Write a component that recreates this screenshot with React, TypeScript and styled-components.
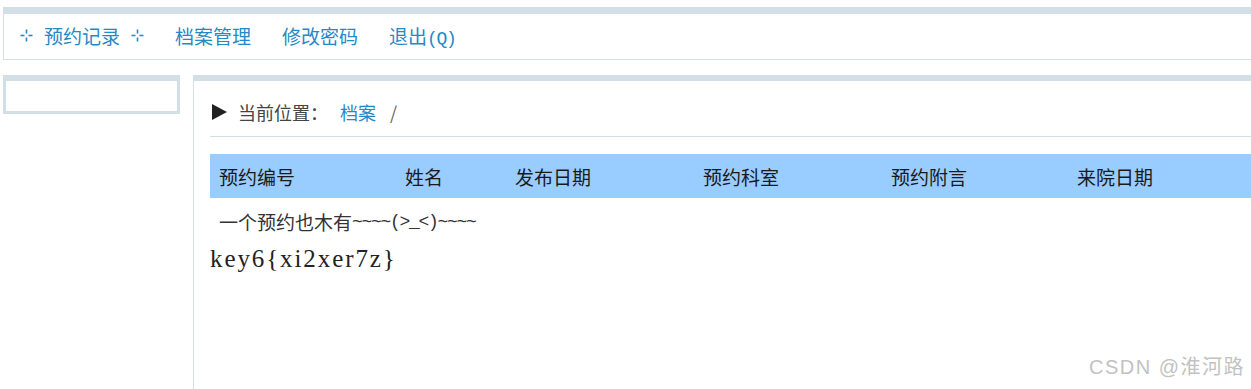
import React from "react";
import styled, { createGlobalStyle } from "styled-components";

const GlobalStyle = createGlobalStyle`
  html, body {
    margin: 0;
    padding: 0;
    background: #fff;
    overflow: hidden;
  }
  body {
    font-family: "Noto Sans CJK SC", "Liberation Sans", sans-serif;
  }
`;

const BAND = "#d3dfe6";
const LINK = "#2489c5";

// page frame
const Page = styled.div`
  position: relative;
  width: 1251px;
  height: 389px;
  padding: 7px 0 0 3px;
  box-sizing: border-box;
  overflow: hidden;
`;

// top navigation
const TopNav = styled.nav`
  width: 1270px;
  height: 53px;
  box-sizing: border-box;
  border: 1px solid ${BAND};
  border-top: 7px solid ${BAND};
  display: flex;
  align-items: center;
  padding: 0 0 0 16px;
  gap: 31px;
`;

const NavLink = styled.a`
  display: flex;
  align-items: center;
  gap: 11px;
  color: ${LINK};
  font-size: 19px;
  text-decoration: none;
  white-space: nowrap;
  margin-top: -2px;
`;

// half-width latin, like the old bitmap CJK fonts
const Ascii = styled.span`
  font-family: "Liberation Mono", monospace;
  font-size: 18px;
  letter-spacing: -1.3px;
`;

const Body = styled.div`
  display: flex;
  align-items: flex-start;
  margin-top: 15px;
  gap: 13px;
`;

const Sidebar = styled.aside`
  flex-shrink: 0;
  width: 177px;
  height: 39px;
  box-sizing: border-box;
  border: 3px solid ${BAND};
  border-top: 6px solid ${BAND};
`;

const Main = styled.main`
  flex-shrink: 0;
  width: 1070px;
  height: 320px;
  box-sizing: border-box;
  border-left: 1px solid ${BAND};
  border-top: 6px solid ${BAND};
  padding-left: 16px;
`;

const Crumbs = styled.div`
  height: 56px;
  box-sizing: border-box;
  padding: 6px 0 0 2px;
  border-bottom: 1px solid ${BAND};
  display: flex;
  align-items: center;
  font-size: 18px;
  color: #444;
  gap: 10px;
`;

const Arrow = styled.span`
  width: 0;
  height: 0;
  border-top: 8px solid transparent;
  border-bottom: 8px solid transparent;
  border-left: 15px solid #222;
  margin-right: 1px;
`;

const CrumbLink = styled.a`
  color: ${LINK};
  text-decoration: none;
  margin-left: 2px;
`;

const Slash = styled.span`
  color: #666;
  margin-left: 4px;
`;

const TableHead = styled.div`
  margin-top: 17px;
  height: 44px;
  background: #99ccff;
  display: grid;
  grid-template-columns: 186px 110px 188px 188px 186px 1fr;
  align-items: center;
  padding-left: 9px;
  font-size: 19px;
  color: #1a1a1a;
`;

const EmptyRow = styled.div`
  height: 45px;
  display: flex;
  align-items: center;
  padding: 2px 0 0 9px;
  box-sizing: border-box;
  font-size: 19px;
  color: #333;
`;

const Key = styled.div`
  font-family: "Liberation Serif", serif;
  font-size: 25px;
  letter-spacing: 1.9px;
  color: #222;
  margin-top: 2px;
`;

const Watermark = styled.div`
  position: absolute;
  right: 6px;
  bottom: 9px;
  font-family: "Liberation Sans", "Noto Sans CJK SC", sans-serif;
  font-size: 20px;
  letter-spacing: 1.5px;
  color: #c2c2c2;
`;

const Cross = () => (
  <svg width="13" height="13" viewBox="0 0 13 13">
    <g stroke={LINK} strokeWidth="1.6">
      <line x1="6.5" y1="0.5" x2="6.5" y2="4.5" />
      <line x1="6.5" y1="8.5" x2="6.5" y2="12.5" />
      <line x1="0.5" y1="6.5" x2="4.5" y2="6.5" />
      <line x1="8.5" y1="6.5" x2="12.5" y2="6.5" />
    </g>
  </svg>
);

const columns = ["预约编号", "姓名", "发布日期", "预约科室", "预约附言", "来院日期"];

export default function App() {
  return (
    <>
      <GlobalStyle />
      <Page>
        <TopNav>
          <NavLink>
            <Cross />
            预约记录
            <Cross />
          </NavLink>
          <NavLink>档案管理</NavLink>
          <NavLink>修改密码</NavLink>
          <NavLink>
            <span>
              退出<Ascii>(Q)</Ascii>
            </span>
          </NavLink>
        </TopNav>
        <Body>
          <Sidebar />
          <Main>
            <Crumbs>
              <Arrow />
              当前位置：
              <CrumbLink>档案</CrumbLink>
              <Slash>/</Slash>
            </Crumbs>
            <TableHead>
              {columns.map((c) => (
                <span key={c}>{c}</span>
              ))}
            </TableHead>
            <EmptyRow>
              一个预约也木有<Ascii>~~~~(&gt;_&lt;)~~~~</Ascii>
            </EmptyRow>
            <Key>key6{"{"}xi2xer7z{"}"}</Key>
          </Main>
        </Body>
        <Watermark>CSDN @淮河路</Watermark>
      </Page>
    </>
  );
}
